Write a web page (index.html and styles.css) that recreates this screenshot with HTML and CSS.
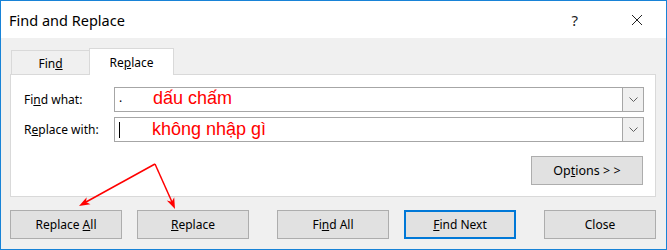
FILE: index.html
```html
<!DOCTYPE html>
<html lang="en">
<head>
    <meta charset="UTF-8">
    <link rel="stylesheet" href="styles.css">
    <title>Find and Replace</title>
</head>
<body>

    <div class="dialog">
        <div class="titlebar">
            <span class="title">Find and Replace</span>
            <span class="help">?</span>
            <span class="close-x">
                <svg width="12" height="12" viewBox="0 0 12 12"><path d="M1 1 L11 11 M11 1 L1 11" stroke="#222" stroke-width="1" fill="none"/></svg>
            </span>
        </div>

        <div class="tabs">
            <div class="tab">Fin<u>d</u></div>
            <div class="tab active">Re<u>p</u>lace</div>
        </div>

        <div class="panel">
            <div class="row">
                <label class="label">Fi<u>n</u>d what:</label>
                <div class="combo">
                    <div class="combo-text">
                        <span class="dot">.</span>
                        <span class="note note-find">dấu chấm</span>
                    </div>
                    <div class="drop"><svg width="9" height="5" viewBox="0 0 9 5"><path d="M0.5 0.5 L4.5 4.5 L8.5 0.5" stroke="#606060" fill="none"/></svg></div>
                </div>
            </div>
            <div class="row">
                <label class="label">R<u>e</u>place with:</label>
                <div class="combo">
                    <div class="combo-text">
                        <span class="caret"></span>
                        <span class="note note-replace">không nhập gì</span>
                    </div>
                    <div class="drop"><svg width="9" height="5" viewBox="0 0 9 5"><path d="M0.5 0.5 L4.5 4.5 L8.5 0.5" stroke="#606060" fill="none"/></svg></div>
                </div>
            </div>
            <div class="options-row">
                <button class="btn options">Op<u>t</u>ions &gt; &gt;</button>
            </div>
        </div>

        <div class="buttons">
            <button class="btn">Replace <u>A</u>ll</button>
            <button class="btn"><u>R</u>eplace</button>
            <button class="btn gap-left">Fi<u>n</u>d All</button>
            <button class="btn default"><u>F</u>ind Next</button>
            <button class="btn gap-left">Close</button>
        </div>

        <svg class="arrows" width="667" height="250" viewBox="0 0 667 250">
            <g stroke="#ff0000" stroke-width="1.5" fill="none">
                <path d="M155 164 L86 202"/>
                <path d="M155 164 L172 202"/>
            </g>
            <g fill="#ff0000">
                <path d="M79 206 L86.7 197.2 L86 202 L90.5 204.2 Z"/>
                <path d="M175 209 L166.8 200.5 L171.8 201.7 L174.2 197.3 Z"/>
            </g>
        </svg>
    </div>

</body>
</html>
```

FILE: styles.css
```css
body {
    margin: 0;
    padding: 0;
    background-color: #ffffff;
    font-family: 'Segoe UI', 'Noto Sans', sans-serif;
    color: #000;
}

.dialog {
    position: relative;
    width: 667px;
    height: 250px;
    box-sizing: border-box;
    border: 1px solid #1883d7;
    background-color: #f0f0f0;
}

.titlebar {
    display: flex;
    align-items: center;
    height: 37px;
    background-color: #fff;
    padding-left: 8px;
}

.title {
    flex: 1;
    font-size: 14.5px;
    color: #000;
}

.help {
    font-size: 15px;
    color: #222;
    margin-right: 53px;
}

.close-x {
    display: flex;
    margin-right: 23px;
}

.tabs {
    display: flex;
    align-items: flex-end;
    height: 27px;
    margin-top: 9px;
    padding-left: 10px;
}

.tab {
    width: 78px;
    height: 24px;
    box-sizing: border-box;
    border: 1px solid #d9d9d9;
    border-bottom: none;
    border-right: none;
    font-size: 12px;
    display: flex;
    justify-content: center;
    align-items: center;
    padding-top: 2px;
}

.tab.active {
    width: 85px;
    height: 27px;
    background-color: #fff;
    border-right: 1px solid #d9d9d9;
    margin-bottom: -1px;
    position: relative;
    padding-top: 0;
}

.panel {
    margin: 0 10px 0 9px;
    height: 123px;
    box-sizing: border-box;
    background-color: #fff;
    border: 1px solid #d9d9d9;
    padding: 12px 11px 0 13px;
}

.row {
    display: flex;
    align-items: center;
    margin-bottom: 5px;
}

.label {
    width: 90px;
    font-size: 12px;
}

.combo {
    flex: 1;
    display: flex;
    height: 25px;
    box-sizing: border-box;
    border: 1px solid #a6a6a6;
    background-color: #fff;
}

.combo-text {
    flex: 1;
    display: flex;
    align-items: center;
    padding-left: 4px;
}

.dot {
    font-size: 12px;
    width: 34px;
    margin-top: -4px;
}

.caret {
    display: inline-block;
    width: 1px;
    height: 16px;
    background-color: #000;
    margin-right: 32px;
}

.note {
    font-family: 'Liberation Sans', Arial, sans-serif;
    font-size: 18px;
    color: #ff0000;
}

.note-find {
    margin-top: -2px;
}

.drop {
    width: 21px;
    box-sizing: border-box;
    border-left: 1px solid #a6a6a6;
    background-color: #f0f0f0;
    display: flex;
    align-items: center;
    justify-content: center;
}

.options-row {
    display: flex;
    justify-content: flex-end;
    margin-top: 14px;
    padding-right: 1px;
}

.btn {
    width: 112px;
    height: 29px;
    box-sizing: border-box;
    background-color: #e1e1e1;
    border: 1px solid #adadad;
    font-family: 'Segoe UI', 'Noto Sans', sans-serif;
    font-size: 12px;
    color: #000;
    padding: 0;
}

.options {
    width: 112px;
    height: 29px;
    font-size: 12.5px;
}

.buttons {
    display: flex;
    gap: 15px;
    padding: 13px 0 0 9px;
}

.gap-left {
    margin-left: 13px;
}

.default {
    border: 2px solid #0078d7;
}

.arrows {
    position: absolute;
    left: -1px;
    top: -1px;
    pointer-events: none;
}
```
